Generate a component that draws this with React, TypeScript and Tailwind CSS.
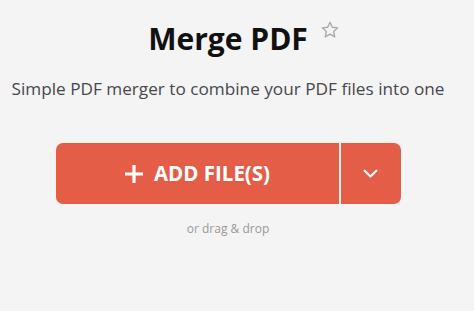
import { FC } from 'react';

const StarIcon: FC = () => (
  <svg viewBox="0 0 24 24" className="w-[20px] h-[20px]" fill="none" stroke="#a8a8ae" strokeWidth={1.6} strokeLinejoin="round">
    <path d="M12 2.8l2.75 5.9 6.45.75-4.78 4.4 1.28 6.38L12 17.02l-5.7 3.2 1.28-6.37L2.8 9.45l6.45-.75z" />
  </svg>
);

const App: FC = () => {
  return (
    <div className="w-[474px] h-[311px] bg-[#f4f4f4] overflow-hidden font-['Open_Sans',sans-serif]">
      <div className="w-[456px] flex flex-col items-center">
        {/* タイトル */}
        <div className="relative mt-[21px]">
          <h1 className="text-[30px] leading-[36px] font-bold text-[#111]">Merge PDF</h1>
          <div className="absolute left-[calc(100%+12px)] top-[-1px]">
            <StarIcon />
          </div>
        </div>

        <p className="mt-[20px] text-[17.2px] leading-[24px] text-[#47474f] whitespace-nowrap">
          Simple PDF merger to combine your PDF files into one
        </p>

        {/* ボタン */}
        <div className="mt-[42px] flex h-[61px] w-[345px] rounded-[7px] bg-[#e45e47] overflow-hidden">
          <button className="flex flex-1 items-center justify-center gap-[10px] text-white">
            <svg viewBox="0 0 20 20" className="w-[20px] h-[20px]" stroke="white" strokeWidth={3.2} fill="none">
              <path d="M10 1v18M1 10h18" />
            </svg>
            <span className="text-[20.5px] font-bold leading-none">ADD FILE(S)</span>
          </button>
          <div className="w-[2px] bg-white/90" />
          <button className="flex w-[60px] items-center justify-center">
            <svg viewBox="0 0 20 12" className="w-[17px] h-[10px]" stroke="white" strokeWidth={2.6} fill="none" strokeLinecap="round" strokeLinejoin="round">
              <path d="M3 2l7 7 7-7" />
            </svg>
          </button>
        </div>

        <p className="mt-[17px] text-[12px] leading-[16px] text-[#999]">or drag &amp; drop</p>
      </div>
    </div>
  );
};

export default App;
